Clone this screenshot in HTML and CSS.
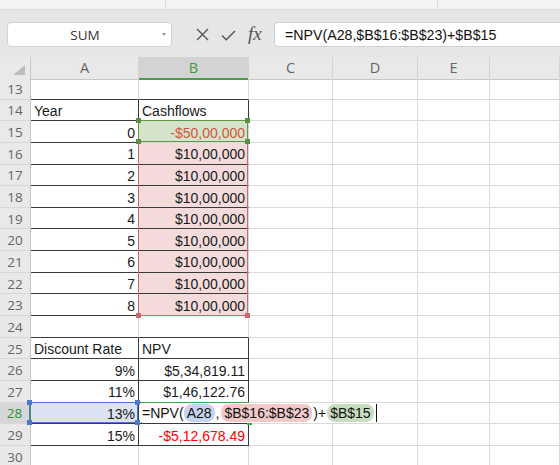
FILE: index.html
```html
<!DOCTYPE html>
<html lang="en">
<head>
    <meta charset="UTF-8" />
    <title>NPV - Sheet</title>
    <link rel="stylesheet" href="styles.css">
</head>
<body>
    <div class="topstrip">
        <div class="ts-a"></div>
        <div class="ts-b"></div>
    </div>
    <div class="fbar">
        <div class="namebox"><span class="nb-text">SUM</span><span class="nb-arrow"></span></div>
        <div class="fb-icons">
            <svg class="ico-x" width="13" height="13" viewBox="0 0 13 13"><path d="M1 1 L12 12 M12 1 L1 12" stroke="#555" stroke-width="1.4" fill="none"/></svg>
            <svg class="ico-ok" width="15" height="11" viewBox="0 0 15 11"><path d="M1 5.5 L5.2 9.8 L14 1" stroke="#555" stroke-width="1.4" fill="none"/></svg>
            <span class="ico-fx">fx</span>
        </div>
        <div class="fb-input">=NPV(A28,$B$16:$B$23)+$B$15</div>
    </div>

    <div class="sheet">
        <div class="row head">
            <div class="corner"><svg width="12" height="10" viewBox="0 0 12 10"><polygon points="12,0 12,10 0,10" fill="#bdbdbd"/></svg></div>
            <div class="ch">A</div>
            <div class="ch sel">B</div>
            <div class="ch">C</div>
            <div class="ch">D</div>
            <div class="ch">E</div>
            <div class="ch"></div>
        </div>

        <div class="row"><div class="rh">13</div><div class="c k"></div><div class="c k"></div><div class="c"></div><div class="c"></div><div class="c"></div><div class="c"></div></div>
        <div class="row"><div class="rh">14</div><div class="c k kr">Year</div><div class="c k kr">Cashflows</div><div class="c"></div><div class="c"></div><div class="c"></div><div class="c"></div></div>
        <div class="row"><div class="rh">15</div><div class="c k kr r">0</div>
            <div class="c r ref-g neg">-$50,00,000<span class="box box-g"><i class="h tl"></i><i class="h tr"></i><i class="h bl"></i><i class="h br"></i></span></div>
            <div class="c"></div><div class="c"></div><div class="c"></div><div class="c"></div></div>
        <div class="row"><div class="rh">16</div><div class="c k kr r">1</div>
            <div class="c k r ref-r">$10,00,000<span class="box box-r"><i class="h bl"></i><i class="h br"></i></span></div>
            <div class="c"></div><div class="c"></div><div class="c"></div><div class="c"></div></div>
        <div class="row"><div class="rh">17</div><div class="c k kr r">2</div><div class="c k r ref-r">$10,00,000</div><div class="c"></div><div class="c"></div><div class="c"></div><div class="c"></div></div>
        <div class="row"><div class="rh">18</div><div class="c k kr r">3</div><div class="c k r ref-r">$10,00,000</div><div class="c"></div><div class="c"></div><div class="c"></div><div class="c"></div></div>
        <div class="row"><div class="rh">19</div><div class="c k kr r">4</div><div class="c k r ref-r">$10,00,000</div><div class="c"></div><div class="c"></div><div class="c"></div><div class="c"></div></div>
        <div class="row"><div class="rh">20</div><div class="c k kr r">5</div><div class="c k r ref-r">$10,00,000</div><div class="c"></div><div class="c"></div><div class="c"></div><div class="c"></div></div>
        <div class="row"><div class="rh">21</div><div class="c k kr r">6</div><div class="c k r ref-r">$10,00,000</div><div class="c"></div><div class="c"></div><div class="c"></div><div class="c"></div></div>
        <div class="row"><div class="rh">22</div><div class="c k kr r">7</div><div class="c k r ref-r">$10,00,000</div><div class="c"></div><div class="c"></div><div class="c"></div><div class="c"></div></div>
        <div class="row"><div class="rh">23</div><div class="c k kr r">8</div><div class="c r ref-r">$10,00,000</div><div class="c"></div><div class="c"></div><div class="c"></div><div class="c"></div></div>
        <div class="row"><div class="rh">24</div><div class="c k"></div><div class="c k"></div><div class="c"></div><div class="c"></div><div class="c"></div><div class="c"></div></div>
        <div class="row"><div class="rh">25</div><div class="c k kr">Discount Rate</div><div class="c k kr">NPV</div><div class="c"></div><div class="c"></div><div class="c"></div><div class="c"></div></div>
        <div class="row"><div class="rh">26</div><div class="c k kr r">9%</div><div class="c k kr r">$5,34,819.11</div><div class="c"></div><div class="c"></div><div class="c"></div><div class="c"></div></div>
        <div class="row"><div class="rh">27</div><div class="c k kr r">11%</div><div class="c k kr r">$1,46,122.76</div><div class="c"></div><div class="c"></div><div class="c"></div><div class="c"></div></div>
        <div class="row"><div class="rh sel">28</div>
            <div class="c k kr r ref-b">13%<span class="box box-b"><i class="h tl"></i><i class="h tr"></i><i class="h bl"></i><i class="h br"></i></span></div>
            <div class="c k kr active">
                <span class="edit">=NPV(<span class="pill p-b">A28</span>,<span class="pill p-r">$B$16:$B$23</span>)+<span class="pill p-g">$B$15</span><span class="caret"></span></span>
                <span class="box box-a"><i class="h br"></i></span>
            </div>
            <div class="c"></div><div class="c"></div><div class="c"></div><div class="c"></div></div>
        <div class="row"><div class="rh">29</div><div class="c k kr r">15%</div><div class="c k kr r red">-$5,12,678.49</div><div class="c"></div><div class="c"></div><div class="c"></div><div class="c"></div></div>
        <div class="row"><div class="rh">30</div><div class="c"></div><div class="c"></div><div class="c"></div><div class="c"></div><div class="c"></div><div class="c"></div></div>
    </div>
</body>
</html>
```

FILE: styles.css
```css
* {
    box-sizing: border-box;
}
body {
    margin: 0;
    width: 560px;
    height: 465px;
    overflow: hidden;
    background: #fff;
    font-family: 'Liberation Sans', Arial, sans-serif;
    color: #1a1a1a;
}

/* ribbon remains + formula bar */
.topstrip {
    height: 10px;
    display: flex;
    background: #f3f3f3;
    border-bottom: 1px solid #dadada;
}
.ts-a {
    width: 166px;
    border-right: 1px solid #dedede;
}
.ts-b {
    width: 272px;
    border-right: 1px solid #dedede;
}
.fbar {
    height: 47px;
    background: #e6e6e6;
    display: flex;
    align-items: center;
    padding-top: 2px;
}
.namebox {
    margin-left: 7px;
    width: 165px;
    height: 25px;
    background: #fff;
    border: 1px solid #d2d2d2;
    border-radius: 4px;
    display: flex;
    align-items: center;
    position: relative;
}
.nb-text {
    flex: 1;
    text-align: center;
    font-family: 'Open Sans', sans-serif;
    font-size: 13.5px;
    color: #333;
}
.nb-arrow {
    width: 0;
    height: 0;
    margin-right: 5px;
    border-left: 2.5px solid transparent;
    border-right: 2.5px solid transparent;
    border-top: 3px solid #9a9a9a;
}
.fb-icons {
    display: flex;
    align-items: center;
    width: 102px;
    padding-left: 24px;
}
.ico-x {
    margin-right: 12px;
}
.ico-ok {
    margin-right: 12px;
    margin-top: 2px;
}
.ico-fx {
    font-family: 'Liberation Serif', serif;
    font-style: italic;
    font-size: 19px;
    color: #555;
    margin-top: -2px;
}
.fb-input {
    flex: 1;
    height: 25px;
    background: #fff;
    border: 1px solid #d2d2d2;
    border-right: none;
    border-radius: 4px 0 0 4px;
    padding-left: 10px;
    font-size: 14.2px;
    line-height: 24px;
    color: #111;
}

/* grid */
.row {
    display: grid;
    grid-template-columns: 31px 108px 110px 84px 85px 72px 1fr;
    height: 21.65px;
}
.row.head {
    height: 21px;
}
.corner, .ch, .rh {
    background: #e9e9e9;
    font-family: 'Open Sans', sans-serif;
    color: #666;
}
.corner {
    border-right: 1px solid #c8c8c8;
    border-bottom: 1px solid #c8c8c8;
    display: flex;
    align-items: flex-end;
    justify-content: flex-end;
    padding: 0 5px 4px 0;
}
.ch {
    border-right: 1px solid #d4d4d4;
    border-bottom: 1px solid #c8c8c8;
    font-size: 14.5px;
    text-align: center;
    line-height: 21px;
}
.ch.sel {
    background: #d3d3d3;
    color: #3f9c3f;
    border-bottom: 2px solid #4a9e48;
}
.rh {
    border-right: 1px solid #c4c4c4;
    border-bottom: 1px solid #d8d8d8;
    font-size: 13.5px;
    display: flex;
    align-items: center;
    justify-content: center;
    padding-top: 1px;
}
.rh.sel {
    background: #d6d6d6;
    color: #2f8f3a;
    border-right: 2px solid #3f9c3f;
}
.c {
    border-right: 1px solid #dadada;
    border-bottom: 1px solid #dadada;
    font-size: 14px;
    padding: 2px 3px 0;
    display: flex;
    align-items: center;
    white-space: nowrap;
    position: relative;
}
.c.k {
    border-bottom-color: #3a3a3a;
}
.c.kr {
    border-right-color: #3a3a3a;
}
.c.r {
    justify-content: flex-end;
}
.neg {
    color: #d0563e;
}
.red {
    color: #f00;
}

/* reference highlights */
.ref-g {
    background: #d6e3cb;
}
.ref-r {
    background: #f4dbdb;
}
.ref-b {
    background: #dae2f3;
}
.box {
    position: absolute;
    top: -1px;
    left: -1px;
    right: 0;
    bottom: 0;
    z-index: 2;
}
.box-g {
    border: 1px solid #5e9848;
}
.box-r {
    bottom: auto;
    height: calc(800% + 9px);
    border: 1px solid #d0676a;
    border-top: none;
    z-index: 1;
}
.box-b {
    left: -2px;
    border: 1px solid #4e76cc;
}
.box-a {
    left: 2px;
    right: -1px;
    border-top: 1px solid #46a546;
    border-bottom: 1px solid #46a546;
}
.h {
    position: absolute;
    width: 5px;
    height: 5px;
}
.box-g .h {
    background: #5b8d44;
}
.box-r .h {
    background: #d0676a;
}
.box-b .h {
    background: #4e76cc;
}
.box-a .h {
    background: #46a546;
}
.h.tl { top: -3px; left: -3px; }
.h.tr { top: -3px; right: -3px; }
.h.bl { bottom: -3px; left: -3px; }
.h.br { bottom: -3px; right: -3px; }

/* cell in edit mode */
.active {
    overflow: visible;
    padding-top: 0;
}
.edit {
    position: relative;
    z-index: 3;
    background: #fff;
    display: flex;
    align-items: center;
    height: 20px;
    padding-top: 1px;
    color: #111;
}
.pill {
    border-radius: 8px;
    padding: 0 3px;
    margin: 0 1px;
    line-height: 18px;
}
.p-b { background: #c5d3ef; margin-left: 0; }
.p-r { background: #f1c9c9; margin-left: 2px; }
.p-g { background: #c8dcc0; margin-left: 1px; }
.caret {
    width: 1px;
    height: 18px;
    background: #111;
    margin-left: 1px;
}
```
